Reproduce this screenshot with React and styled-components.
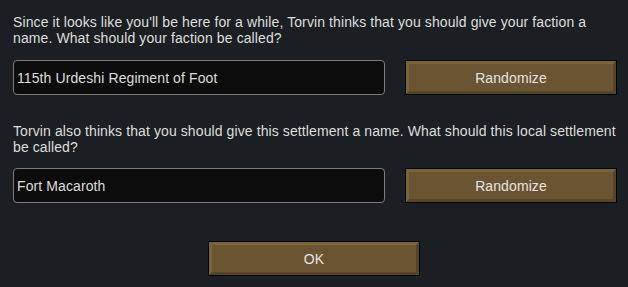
import React from "react";
import styled, { createGlobalStyle } from "styled-components";

const GlobalStyle = createGlobalStyle`
  html, body {
    margin: 0;
    padding: 0;
    background: #1b1e22;
  }
  body {
    font-family: "Liberation Sans", Arial, sans-serif;
    font-size: 14px;
    letter-spacing: 0.1px;
    color: #dcdcdc;
  }
`;

const Dialog = styled.div`
  width: 628px;
  height: 287px;
  box-sizing: border-box;
  padding: 14px 11px 0 13px;
  display: flex;
  flex-direction: column;
`;

const Prompt = styled.p`
  margin: 0;
  margin-top: ${(p) => p.$top || 0}px;
  line-height: 16px;
  color: #dedede;
`;

const NameRow = styled.div`
  display: grid;
  grid-template-columns: 1fr 212px;
  column-gap: 20px;
  margin-top: ${(p) => p.$top}px;
`;

const NameInput = styled.input`
  height: 35px;
  box-sizing: border-box;
  border: 1px solid #7c7c7c;
  border-radius: 4px;
  background: #0c0c0d;
  color: #dcdcdc;
  font-family: "Liberation Sans", Arial, sans-serif;
  font-size: 14px;
  letter-spacing: 0.1px;
  padding: 0 3px;
  outline: none;
`;

const WoodButton = styled.button`
  width: 212px;
  height: 35px;
  box-sizing: border-box;
  border: 1px solid #000;
  padding: 0;
  background: #000;
  cursor: pointer;

  & > span {
    display: flex;
    align-items: center;
    justify-content: center;
    height: 100%;
    box-sizing: border-box;
    border-style: solid;
    border-width: 3px;
    border-color: #7b6338 #564428 #564428 #7b6338;
    background: #6b5431;
    color: #e4e4e4;
    font-family: "Liberation Sans", Arial, sans-serif;
    font-size: 14px;
    letter-spacing: 0.1px;
  }
`;

const Footer = styled.div`
  display: flex;
  justify-content: center;
  margin-top: 38px;
  padding-right: 2px;
`;

const App = () => {
  return (
    <>
      <GlobalStyle />
      <Dialog>
        <Prompt>
          Since it looks like you'll be here for a while, Torvin thinks that you should give your faction a
          name. What should your faction be called?
        </Prompt>
        <NameRow $top={14}>
          <NameInput defaultValue="115th Urdeshi Regiment of Foot" />
          <WoodButton>
            <span>Randomize</span>
          </WoodButton>
        </NameRow>

        <Prompt $top={28}>
          Torvin also thinks that you should give this settlement a name. What should this local settlement
          be called?
        </Prompt>
        <NameRow $top={13}>
          <NameInput defaultValue="Fort Macaroth" />
          <WoodButton>
            <span>Randomize</span>
          </WoodButton>
        </NameRow>

        <Footer>
          <WoodButton>
            <span>OK</span>
          </WoodButton>
        </Footer>
      </Dialog>
    </>
  );
};

export default App;
